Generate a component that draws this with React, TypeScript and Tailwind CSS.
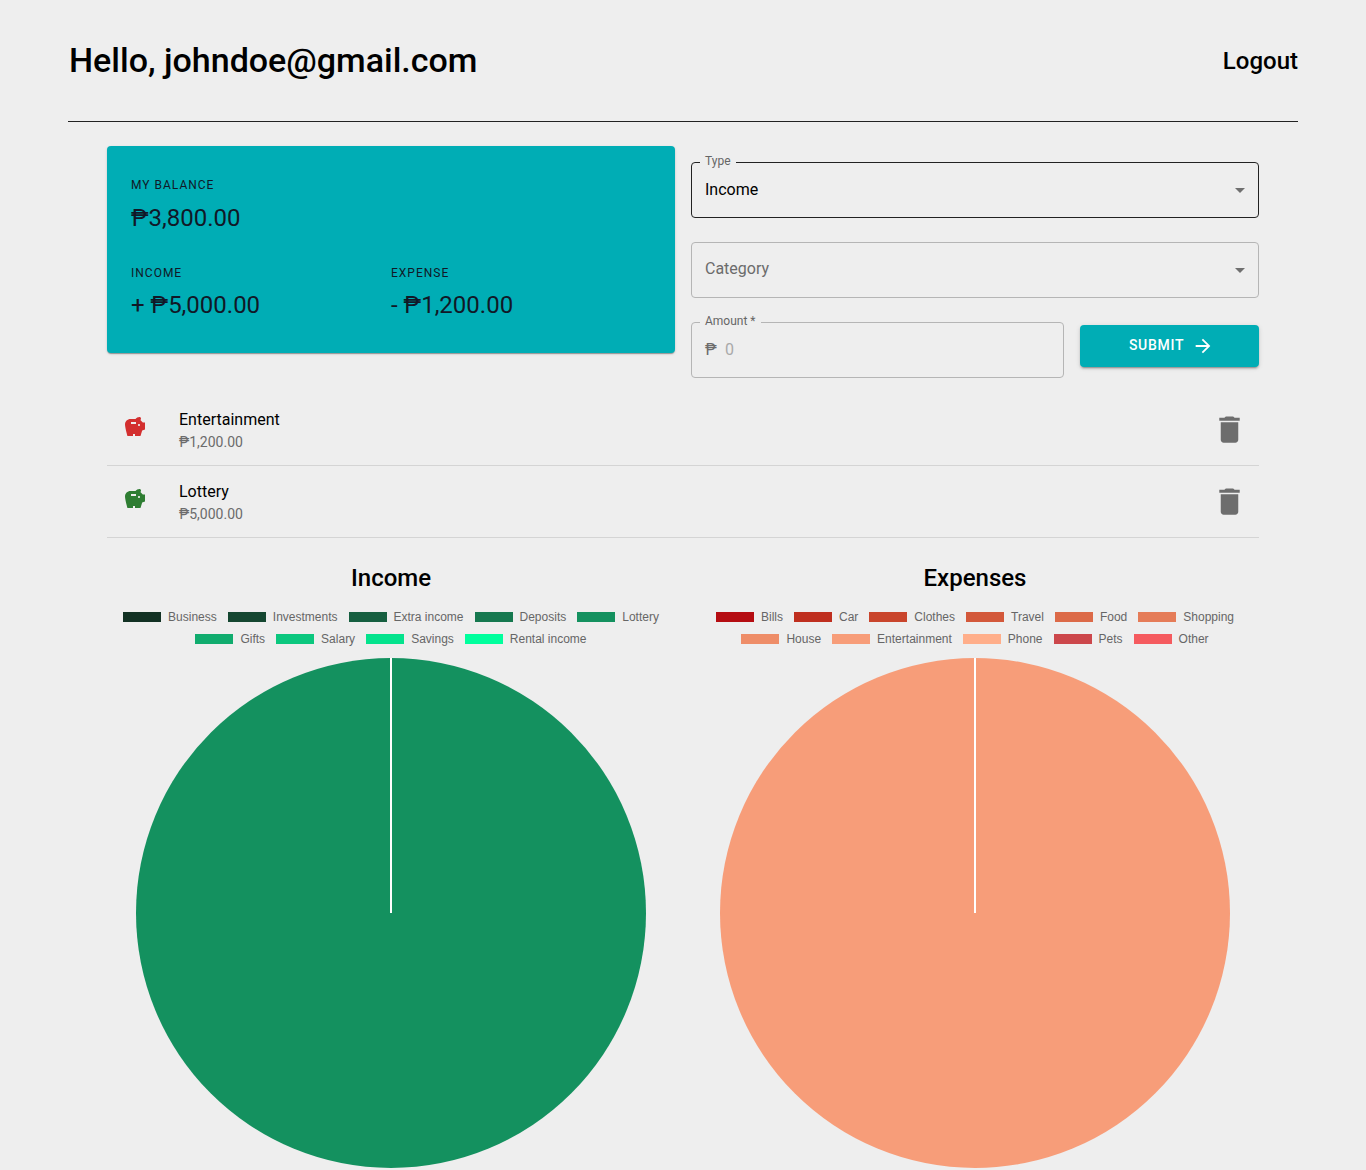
const incomeLegend = [
  ["Business", "#123123"],
  ["Investments", "#154731"],
  ["Extra income", "#165f40"],
  ["Deposits", "#16784f"],
  ["Lottery", "#14915f"],
  ["Gifts", "#10ac6e"],
  ["Salary", "#0bc77e"],
  ["Savings", "#04e38d"],
  ["Rental income", "#00ff9d"],
];

const expenseLegend = [
  ["Bills", "#b50d12"],
  ["Car", "#bf2f1f"],
  ["Clothes", "#c9452c"],
  ["Travel", "#d3583a"],
  ["Food", "#dc6a48"],
  ["Shopping", "#e57c58"],
  ["House", "#ee8d68"],
  ["Entertainment", "#f79d79"],
  ["Phone", "#ffae8a"],
  ["Pets", "#cc474b"],
  ["Other", "#f55b5f"],
];

const transactions = [
  { id: 1, name: "Entertainment", amount: "₱1,200.00", color: "#d32f2f" },
  { id: 2, name: "Lottery", amount: "₱5,000.00", color: "#2e7d32" },
];

function ArrowDrop() {
  return (
    <svg viewBox="0 0 24 24" className="w-6 h-6 fill-[#6f6f6f] shrink-0">
      <path d="M7 10l5 5 5-5z" />
    </svg>
  );
}

function SelectField({ label, value, focused }: { label?: string; value: string; focused?: boolean }) {
  return (
    <div
      className={`relative h-[56px] rounded border flex items-center justify-between pl-[13px] pr-[6px] ${
        focused ? "border-[#222222]" : "border-[#b5b5b5]"
      }`}
    >
      {label && (
        <span className="absolute left-[8px] -top-[10px] bg-[#eeeeee] px-[5px] text-[12px] leading-[16px] text-[#666666]">
          {label}
        </span>
      )}
      <span className={focused ? "text-black" : "text-[#6b6b6b] mb-[2px]"}>{value}</span>
      <ArrowDrop />
    </div>
  );
}

function Legend({ items }: { items: string[][] }) {
  return (
    <div className="mt-3 flex flex-wrap justify-center gap-x-[11px] font-['Liberation_Sans',sans-serif] text-[12px] text-[#666666]">
      {items.map(([name, color]) => (
        <div key={name} className="flex items-center gap-[7px] h-[22px]">
          <span className="w-[38px] h-[10px]" style={{ backgroundColor: color }} />
          <span>{name}</span>
        </div>
      ))}
    </div>
  );
}

function Pie({ color }: { color: string }) {
  return (
    <svg viewBox="0 0 510 510" className="w-[510px] h-[510px] mx-auto mt-2 block">
      <circle cx="255" cy="255" r="255" fill={color} />
      <line x1="255" y1="0" x2="255" y2="255" stroke="#ffffff" strokeWidth="2" />
    </svg>
  );
}

function ChartCard({ title, items, color }: { title: string; items: string[][]; color: string }) {
  return (
    <div>
      <h5 className="text-center text-[24px] leading-[32px] font-medium text-black">{title}</h5>
      <Legend items={items} />
      <Pie color={color} />
    </div>
  );
}

export default function App() {
  return (
    <div className="h-[1170px] overflow-hidden bg-[#eeeeee] font-['Roboto',sans-serif] text-black">
      <header className="mx-[68px] h-[122px] border-b border-[#222222] flex items-center justify-between">
        <h1 className="ml-px mb-[2px] text-[34px] leading-[42px] font-medium">Hello, johndoe@gmail.com</h1>
        <button className="text-[24px] leading-[32px] font-medium">Logout</button>
      </header>

      <main className="w-[1152px] mx-auto mt-6">
        <div className="grid grid-cols-2 gap-4">
          <div className="self-start rounded bg-[#00adb5] pt-6 pb-8 px-6 shadow-[0_2px_1px_-1px_rgba(0,0,0,0.2),0_1px_1px_0_rgba(0,0,0,0.14),0_1px_3px_0_rgba(0,0,0,0.12)] text-[#111827]">
            <p className="text-[12px] leading-[30px] mb-[2px] tracking-[1px] uppercase">My Balance</p>
            <p className="text-[24px] leading-[32px]">₱3,800.00</p>
            <div className="grid grid-cols-2 mt-[23px]">
              <div>
                <p className="text-[12px] leading-[32px] tracking-[1px] uppercase">Income</p>
                <p className="text-[24px] leading-[32px]">+ ₱5,000.00</p>
              </div>
              <div>
                <p className="text-[12px] leading-[32px] tracking-[1px] uppercase">Expense</p>
                <p className="text-[24px] leading-[32px]">- ₱1,200.00</p>
              </div>
            </div>
          </div>

          <div className="pt-4 flex flex-col gap-6">
            <SelectField label="Type" value="Income" focused />
            <SelectField value="Category" />
            <div className="flex items-start gap-4">
              <div className="relative flex-1 h-[56px] rounded border border-[#b5b5b5] flex items-center pl-[13px]">
                <span className="absolute left-[8px] -top-[10px] bg-[#eeeeee] px-[5px] text-[12px] leading-[16px] text-[#666666]">
                  Amount *
                </span>
                <span className="text-[#6b6b6b] w-[20px]">₱</span>
                <span className="text-[#a9a9a9]">0</span>
              </div>
              <button className="mt-[3px] w-[179px] h-[42px] rounded bg-[#00adb5] flex items-center justify-center gap-2 text-white text-[14px] font-medium tracking-[0.7px] uppercase shadow-[0_3px_1px_-2px_rgba(0,0,0,0.2),0_2px_2px_0_rgba(0,0,0,0.14),0_1px_5px_0_rgba(0,0,0,0.12)]">
                <span className="mb-[2px]">Submit</span>
                <svg viewBox="0 0 24 24" className="w-[22px] h-[22px] -mr-1 fill-white">
                  <path d="M12 4l-1.41 1.41L16.17 11H4v2h12.17l-5.58 5.59L12 20l8-8z" />
                </svg>
              </button>
            </div>
          </div>
        </div>

        <ul className="mt-4">
          {transactions.map((t) => (
            <li key={t.id} className="h-[72px] border-b border-[#d4d4d4] flex items-center pl-4 pr-3">
              <div className="w-14 shrink-0">
                <svg viewBox="0 0 24 24" className="w-6 h-6 mb-[6px]" style={{ fill: t.color }}>
                  <path d="M19.83 7.5l-2.27-2.27c.07-.42.18-.81.32-1.15.08-.18.12-.37.12-.58 0-.83-.67-1.5-1.5-1.5-1.64 0-3.09.79-4 2h-5C4.46 4 2 6.46 2 9.5S4.5 21 4.5 21H10v-2h2v2h5.5l1.68-5.59 2.82-.94V7.5h-2.17zM13 9H8V7h5v2zm3 2c-.55 0-1-.45-1-1s.45-1 1-1 1 .45 1 1-.45 1-1 1z" />
                </svg>
              </div>
              <div className="flex-1">
                <p className="text-[16px] leading-[24px]">{t.name}</p>
                <p className="text-[14px] leading-[20px] text-[#6b6b6b]">{t.amount}</p>
              </div>
              <svg viewBox="0 0 24 24" className="w-[35px] h-[35px] fill-[#6d6d6d]">
                <path d="M6 19c0 1.1.9 2 2 2h8c1.1 0 2-.9 2-2V7H6v12zM19 4h-3.5l-1-1h-5l-1 1H5v2h14V4z" />
              </svg>
            </li>
          ))}
        </ul>

        <div className="grid grid-cols-2 gap-4 mt-6">
          <ChartCard title="Income" items={incomeLegend} color="#14915f" />
          <ChartCard title="Expenses" items={expenseLegend} color="#f79d79" />
        </div>
      </main>
    </div>
  );
}
